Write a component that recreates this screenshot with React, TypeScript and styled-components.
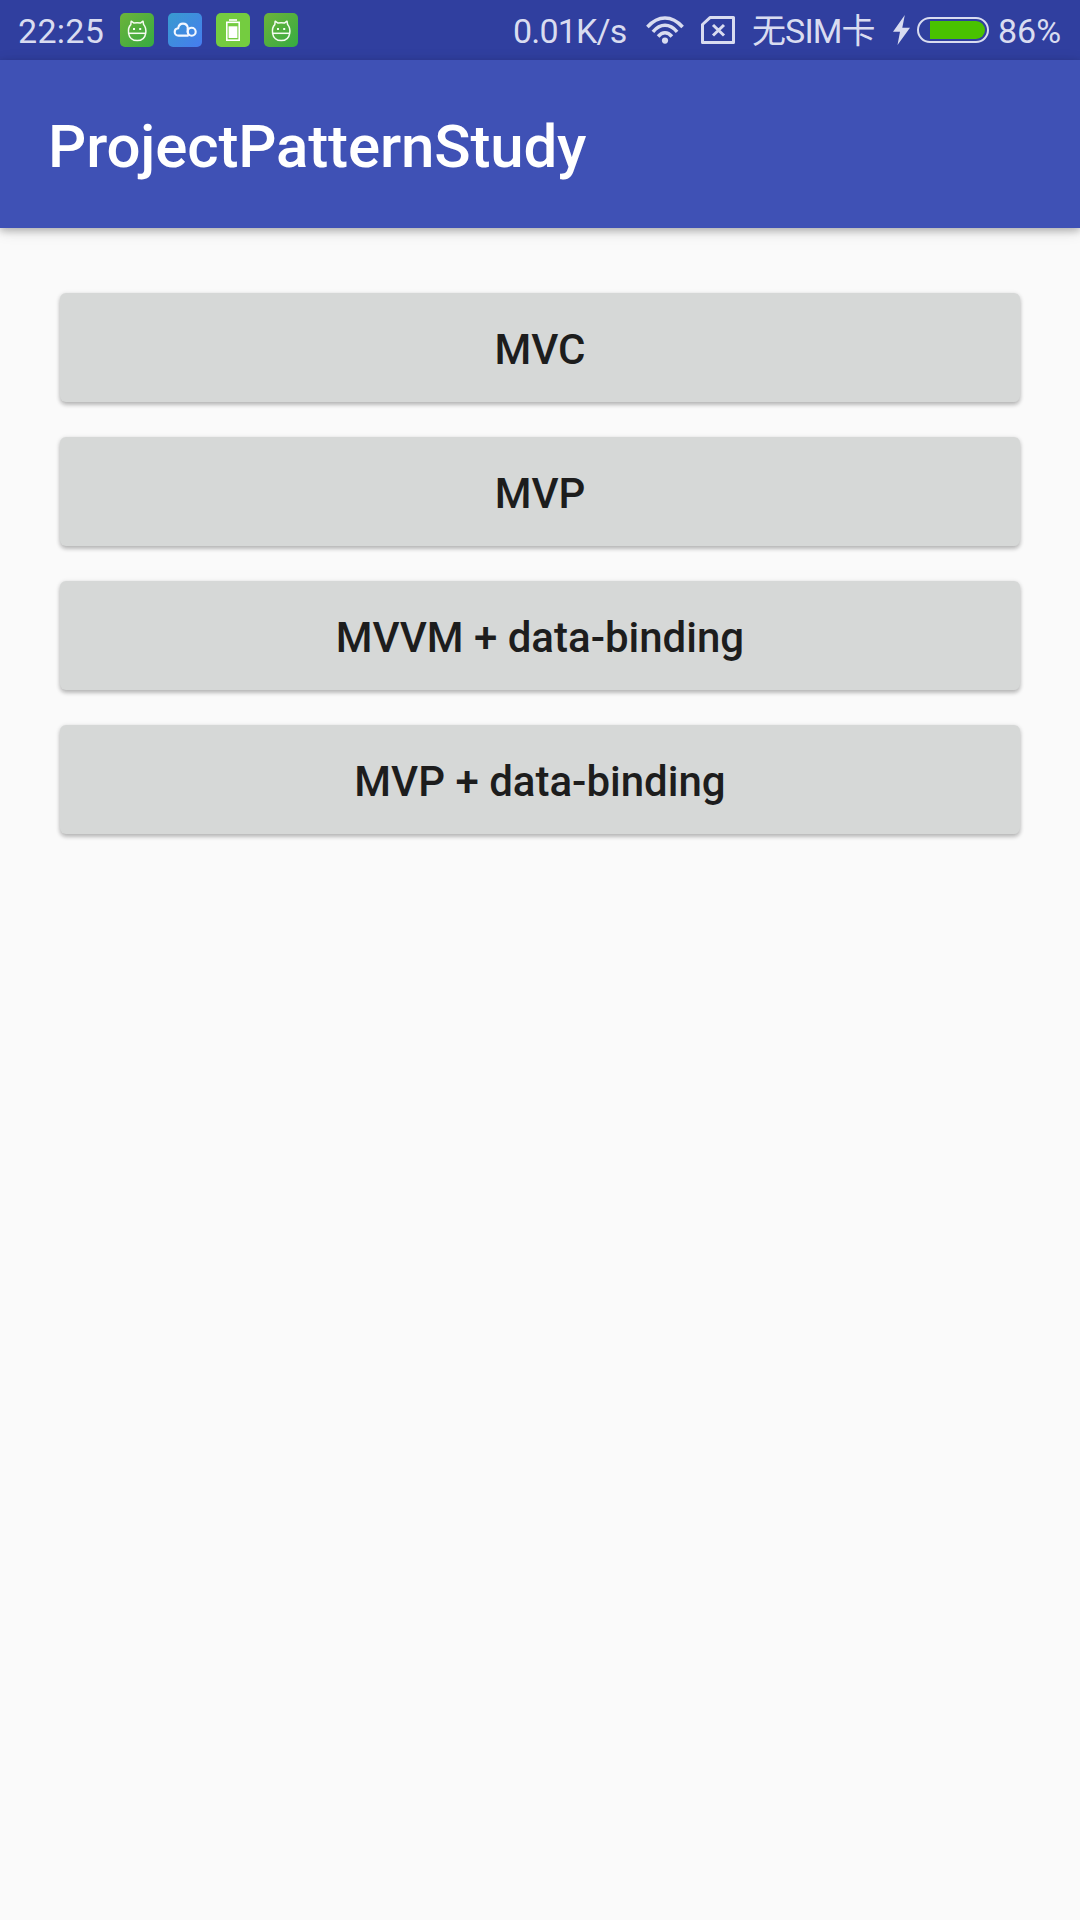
import React from "react";
import styled, { createGlobalStyle } from "styled-components";

const GlobalStyle = createGlobalStyle`
  html, body { margin: 0; padding: 0; background: #fafafa; }
  *, *::before, *::after { box-sizing: border-box; }
`;

const Screen = styled.div`
  display: flex;
  flex-direction: column;
  width: 1080px;
  height: 1920px;
  overflow: hidden;
  background: #fafafa;
  font-family: Roboto, "Noto Sans CJK SC", sans-serif;
`;

const StatusBar = styled.header`
  display: flex;
  align-items: center;
  justify-content: space-between;
  height: 60px;
  flex: none;
  padding: 0 18px;
  background: #303f9f;
  color: #d9dcf0;
`;

const StatusGroup = styled.div`
  display: flex;
  align-items: center;
  height: 60px;
`;

const StatusText = styled.span<{ $width: number; $spacing?: number; $indent?: number }>`
  width: ${(p) => p.$width}px;
  padding: 2px 0 0 ${(p) => p.$indent ?? 0}px;
  font-size: 34px;
  letter-spacing: ${(p) => p.$spacing ?? 0}px;
  line-height: 40px;
  white-space: nowrap;
`;

const Notifications = styled.div`
  display: flex;
  gap: 14px;
`;

const AppBadge = styled.span<{ $fill: string }>`
  width: 34px;
  height: 34px;
  border-radius: 5px;
  background: ${(p) => p.$fill};
  svg { display: block; }
`;

const Glyph = styled.svg<{ $gap?: number }>`
  display: block;
  flex: none;
  margin-right: ${(p) => p.$gap ?? 0}px;
`;

const Toolbar = styled.div`
  display: flex;
  align-items: center;
  flex: none;
  height: 168px;
  padding: 6px 48px 0;
  background: #3f51b5;
  color: #fff;
  box-shadow: 0 3px 7px rgba(0, 0, 0, 0.22), 0 3px 14px rgba(0, 0, 0, 0.13);
`;

const Title = styled.h1`
  margin: 0;
  font-size: 60px;
  font-weight: 500;
  letter-spacing: -0.15px;
  line-height: 70px;
`;

const Content = styled.main`
  display: flex;
  flex-direction: column;
  gap: 35px;
  padding: 65px 60px;
`;

const PatternButton = styled.button`
  height: 109px;
  padding: 5px 0 0;
  border: 0;
  border-radius: 6px;
  background: #d6d8d7;
  color: #1d1d1d;
  font-family: inherit;
  font-size: 42px;
  font-weight: 500;
  line-height: 50px;
  box-shadow: 0 3px 4px rgba(0, 0, 0, 0.2), 0 1px 5px rgba(0, 0, 0, 0.14);
`;

const CatIcon = () => (
  <svg width="34" height="34" viewBox="0 0 34 34" fill="none" stroke="#f4fbf0" strokeWidth="1.5" strokeLinejoin="round">
    <path d="M8.600 20.300C8 15.500 9.200 13 10.800 11.600L11.200 8.200L14 10.100Q17.200 9.400 20.400 10.100L23 8.200L23.600 11.600C25.300 13.500 26.300 16 25.700 20.300C25 24.600 21.800 27.600 17.200 27.600S9.200 24.600 8.600 20.300Z" />
    <path d="M8.500 20.300H25.800" />
    <path d="M13 16H15M19.200 16H21.200" strokeWidth="2" />
  </svg>
);

const CloudIcon = () => (
  <svg width="34" height="34" viewBox="0 0 34 34" fill="none" stroke="#f2f7ff" strokeWidth="2.100">
    <path d="M20.500 22.600H10.500C8.200 22.600 6.700 20.900 6.700 18.900C6.700 16.800 8.300 15.300 10.200 15.200C10.700 12.200 12.500 10.600 15 10.600C17.700 10.600 19.500 12.500 19.900 15.200" />
    <circle cx="23.700" cy="18.700" r="4" />
    <path d="M19.700 15V18.700Q19.700 21 21.500 22.500" />
  </svg>
);

const BatteryAppIcon = () => (
  <svg width="34" height="34" viewBox="0 0 34 34" fill="none" stroke="#fff">
    <path d="M13 7H21" strokeWidth="1.600" />
    <rect x="10.800" y="9.300" width="12.400" height="17.900" strokeWidth="1.600" />
    <rect x="12.600" y="13.300" width="8.800" height="11.700" fill="#fff" stroke="none" />
  </svg>
);

const WifiIcon = () => (
  <Glyph $gap={17} width="38" height="28" viewBox="0 0 38 28" fill="none" stroke="#d9dcf0" strokeWidth="3.500">
    <path d="M1.400 11Q9.500 2 19 2T36.600 11" />
    <path d="M6.900 15.800Q12.500 9.300 19 9.300T31.100 15.800" />
    <path d="M12.100 20.500Q15.300 16.800 19 16.800T25.900 20.500" />
    <circle cx="19" cy="24.600" r="3.100" fill="#d9dcf0" stroke="none" />
  </Glyph>
);

const NoSimIcon = () => (
  <Glyph $gap={16} width="34" height="29" viewBox="0 0 34 29" fill="none" stroke="#d9dcf0">
    <path d="M9 1.600H32.500V26.600H1.500V8.500Z" strokeWidth="3" strokeLinejoin="round" />
    <path d="M12 9L23 19.500M23 9L12 19.500" strokeWidth="3" />
  </Glyph>
);

const BoltIcon = () => (
  <Glyph $gap={7} width="17" height="30" viewBox="0 0 17 30">
    <path d="M11.800 0L0 16.800H7L4.500 30L17 12.800H9.300Z" fill="#d9dcf0" />
  </Glyph>
);

const BatteryCapsule = styled.div`
  display: flex;
  justify-content: flex-end;
  width: 72px;
  height: 26px;
  padding: 2px;
  margin-right: 9px;
  border: 2px solid #d9dcf0;
  border-radius: 13px;
`;

const BatteryLevel = styled.div`
  width: 55px;
  height: 18px;
  border-radius: 0 9px 9px 0;
  background: #49c200;
`;

const GREEN = "linear-gradient(135deg, #6db33a, #35ab42)";
const patterns = ["MVC", "MVP", "MVVM + data-binding", "MVP + data-binding"];

export default function App() {
  return (
    <Screen>
      <GlobalStyle />
      <StatusBar>
        <StatusGroup>
          <StatusText $width={102} $spacing={0.3}>22:25</StatusText>
          <Notifications>
            <AppBadge $fill={GREEN}><CatIcon /></AppBadge>
            <AppBadge $fill="linear-gradient(135deg, #389bcf, #467cf0)"><CloudIcon /></AppBadge>
            <AppBadge $fill="#74cc40"><BatteryAppIcon /></AppBadge>
            <AppBadge $fill={GREEN}><CatIcon /></AppBadge>
          </Notifications>
        </StatusGroup>
        <StatusGroup>
          <StatusText $width={134} $spacing={-0.8} $indent={1}>0.01K/s</StatusText>
          <WifiIcon />
          <NoSimIcon />
          <StatusText $width={142} $spacing={-0.9} $indent={1}>无SIM卡</StatusText>
          <BoltIcon />
          <BatteryCapsule><BatteryLevel /></BatteryCapsule>
          <StatusText $width={64}>86%</StatusText>
        </StatusGroup>
      </StatusBar>
      <Toolbar><Title>ProjectPatternStudy</Title></Toolbar>
      <Content>
        {patterns.map((name) => <PatternButton key={name}>{name}</PatternButton>)}
      </Content>
    </Screen>
  );
}
